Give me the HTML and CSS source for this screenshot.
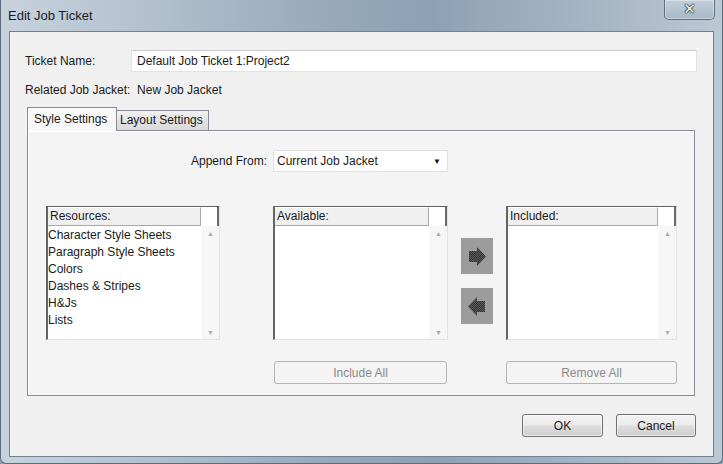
FILE: index.html
```html
<!DOCTYPE html>
<html>
<head>
<meta charset="utf-8">
<title>Edit Job Ticket</title>
<link rel="stylesheet" href="styles.css">
</head>
<body>
<div class="window">
  <div class="titlebar">
    <span class="title">Edit Job Ticket</span>
    <div class="close"><span>✕</span></div>
  </div>
  <div class="client">
    <div class="row ticket">
      <label class="lbl">Ticket Name:</label>
      <div class="textbox">Default Job Ticket 1:Project2</div>
    </div>
    <div class="related">Related Job Jacket:&nbsp;&nbsp;New Job Jacket</div>
    <div class="tabs">
      <div class="tab active">Style Settings</div>
      <div class="tab">Layout Settings</div>
    </div>
    <div class="panel">
      <div class="append-label">Append From:</div>
      <div class="select c3"><span>Current Job Jacket</span><span class="caret">▼</span></div>

      <div class="listbox c1 lists">
        <div class="lhead">Resources:</div>
        <div class="lcorner"></div>
        <div class="litems">
          <div>Character Style Sheets</div>
          <div>Paragraph Style Sheets</div>
          <div>Colors</div>
          <div>Dashes &amp; Stripes</div>
          <div>H&amp;Js</div>
          <div>Lists</div>
        </div>
        <div class="scroll"><span>▲</span><span>▼</span></div>
      </div>

      <div class="listbox c3 lists">
        <div class="lhead">Available:</div>
        <div class="lcorner"></div>
        <div class="litems"></div>
        <div class="scroll"><span>▲</span><span>▼</span></div>
      </div>

      <div class="arrows c5 lists">
        <div class="arrowbtn">
          <svg width="32" height="36" viewBox="0 0 32 36">
            <defs>
              <pattern id="dith" width="2" height="2" patternUnits="userSpaceOnUse">
                <rect width="2" height="2" fill="#5a5a5a"/>
                <rect width="1" height="1" fill="#333"/>
                <rect x="1" y="1" width="1" height="1" fill="#333"/>
              </pattern>
            </defs>
            <polygon points="8,13 16,13 16,9 25,18.5 16,28 16,24 8,24" fill="url(#dith)"/>
          </svg>
        </div>
        <div class="arrowbtn">
          <svg width="32" height="36" viewBox="0 0 32 36">
            <polygon points="24,13 16,13 16,9 7,18.5 16,28 16,24 24,24" fill="url(#dith)"/>
          </svg>
        </div>
      </div>

      <div class="listbox c7 lists">
        <div class="lhead">Included:</div>
        <div class="lcorner"></div>
        <div class="litems"></div>
        <div class="scroll"><span>▲</span><span>▼</span></div>
      </div>

      <div class="btn disabled c3 bottom inset">Include All</div>
      <div class="btn disabled c7 bottom">Remove All</div>
    </div>
    <div class="footer">
      <div class="btn ok">OK</div>
      <div class="btn cancel">Cancel</div>
    </div>
  </div>
</div>
</body>
</html>
```
FILE: styles.css
```css
* { box-sizing: border-box; }
html, body { margin: 0; padding: 0; }
body {
  width: 723px;
  height: 464px;
  overflow: hidden;
  font-family: "Liberation Sans", Arial, sans-serif;
  font-size: 12px;
  color: #1a1a1a;
  background: #8fa2b4;
}
.window {
  width: 723px;
  height: 464px;
  display: flex;
  flex-direction: column;
  padding: 0 8px 6px 8px;
  background: linear-gradient(to right, #c7d2dd 0%, #b3c1cf 20%, #97a9bb 45%, #8ea1b4 60%, #a9b8c7 85%, #bcc8d4 100%);
  border: 1px solid #5e6d7c;
  border-top: none;
  border-radius: 0 0 6px 6px;
}
.titlebar {
  height: 31px;
  flex: none;
  display: flex;
  align-items: flex-start;
  justify-content: space-between;
}
.title {
  font-size: 13px;
  color: #1b1b1b;
  margin-top: 8px;
  margin-left: -1px;
}
.close {
  width: 51px;
  height: 20px;
  margin-right: -1px;
  border: 1px solid #5f7082;
  border-top: none;
  border-radius: 0 0 5px 5px;
  background: linear-gradient(#c3cfdb, #a9b9c9);
  box-shadow: inset 0 0 0 1px rgba(255,255,255,0.35);
  display: flex;
  align-items: center;
  justify-content: center;
}
.close span {
  color: #fff;
  font-family: "DejaVu Sans", sans-serif;
  font-weight: bold;
  font-size: 15px;
  line-height: 1;
  text-shadow: 0 0 1px #222, 0 0 1px #222, 0 0 1px #222, 0 0 2px #444;
}
.client {
  flex: 1;
  background: #f0f0f0;
  border: 1px solid #6f8193;
  padding: 18px 16px 0 15px;
  display: flex;
  flex-direction: column;
}
.row { display: flex; align-items: center; }
.ticket { height: 22px; }
.lbl { width: 106px; flex: none; }
.textbox {
  flex: 1;
  height: 22px;
  background: #fff;
  border: 1px solid #e2e3e5;
  border-top-color: #c9cacc;
  padding: 0 5px;
  line-height: 20px;
}
.related {
  margin-top: 7px;
  line-height: 22px;
  height: 22px;
}
.tabs {
  margin: 6px 0 0 2px;
  height: 23px;
  display: flex;
  align-items: flex-end;
  position: relative;
  z-index: 1;
}
.tab {
  height: 20px;
  line-height: 19px;
  padding: 0 3px;
  width: 93px;
  white-space: nowrap;
  border: 1px solid #898c95;
  border-bottom: none;
  background: linear-gradient(#f2f2f2, #e3e3e3 50%, #d9d9d9);
  margin-left: -1px;
}
.tab.active {
  width: 90px;
  height: 24px;
  margin-left: 0;
  margin-bottom: -1px;
  padding: 0 6px;
  line-height: 22px;
  background: #f8f8f8;
  position: relative;
  z-index: 2;
}
.panel {
  margin: 0 2px;
  height: 266px;
  border: 1px solid #898c95;
  background: #f4f4f4;
  box-shadow: inset 1px 1px 0 #fff;
  padding: 19px 0 0 18px;
  display: grid;
  grid-template-columns: 174px 53px 175px 13px 32px 13px 171px;
  grid-template-rows: 22px auto auto;
  align-content: start;
  align-items: start;
}
.c1 { grid-column: 1; }
.c3 { grid-column: 3; }
.c5 { grid-column: 5; }
.c7 { grid-column: 7; }
.append-label {
  grid-column: 1 / 3;
  grid-row: 1;
  text-align: right;
  padding-right: 6px;
  line-height: 22px;
}
.select {
  grid-row: 1;
  height: 22px;
  background: #fff;
  border: 1px solid #e0e0e0;
  display: flex;
  align-items: center;
  justify-content: space-between;
  padding: 0 6px 0 3px;
}
.caret { font-size: 8px; color: #111; }
.lists { grid-row: 2; margin-top: 34px; }
.bottom { grid-row: 3; margin-top: 21px; }
.listbox {
  height: 134px;
  border: 1px solid;
  border-color: #646464 #e3e3e3 #e3e3e3 #646464;
  border-left-width: 2px;
  background: #fff;
  display: grid;
  grid-template-columns: 1fr 18px;
  grid-template-rows: 19px 1fr;
}
.lhead {
  background: #f0f0f0;
  border-right: 1px solid #a8a8a8;
  border-bottom: 1px solid #a8a8a8;
  border-top: 1px solid #fff;
  padding-left: 2px;
  line-height: 17px;
}
.lcorner {
  background: #fff;
  border-right: 2px solid #6a6a6a;
}
.litems {
  padding-top: 1px;
  padding-left: 0;
}
.litems div { line-height: 17px; height: 17px; white-space: nowrap; }
.scroll {
  background: #f6f6f6;
  border-left: 1px solid #fafafa;
  display: flex;
  flex-direction: column;
  justify-content: space-between;
  align-items: center;
  padding: 4px 0 3px;
  color: #a9a9a9;
  font-size: 7px;
}
.arrows {
  display: flex;
  flex-direction: column;
  padding-top: 32px;
  gap: 14px;
}
.arrowbtn {
  width: 32px;
  height: 36px;
  background: #9c9c9c;
}
.arrowbtn svg { display: block; }
.btn {
  height: 23px;
  border: 1px solid #707070;
  border-radius: 3px;
  background: linear-gradient(#f2f2f2 0%, #ebebeb 48%, #dddddd 52%, #cfcfcf 100%);
  box-shadow: inset 0 0 0 1px rgba(255,255,255,0.6);
  display: flex;
  align-items: center;
  justify-content: center;
  color: #1a1a1a;
}
.btn.disabled {
  border-color: #b4b4b4;
  background: #f4f4f4;
  color: #8a8a8a;
  box-shadow: none;
}
.inset { margin-left: 1px; margin-right: 1px; }
.footer {
  margin-top: 18px;
  display: flex;
  justify-content: flex-end;
  padding-right: 1px;
  gap: 13px;
}
.ok { width: 81px; }
.cancel { width: 80px; }
```
